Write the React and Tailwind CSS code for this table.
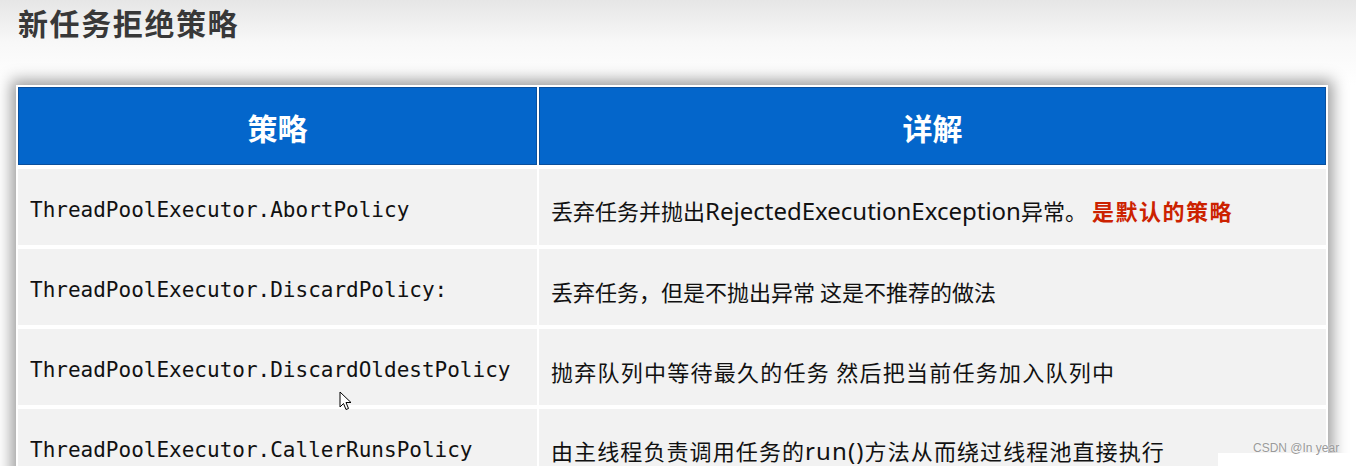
import React from 'react';

const MONO = { fontFamily: '"DejaVu Sans Mono", "Liberation Mono", monospace' };
const SANS = { fontFamily: '"Noto Sans CJK SC", "Noto Sans", sans-serif' };
const LATIN = { fontFamily: '"Noto Sans", "Noto Sans CJK SC", sans-serif' };

const ROWS = [
  {
    policy: 'ThreadPoolExecutor.AbortPolicy',
    detail: '丢弃任务并抛出RejectedExecutionException异常。',
    note: '是默认的策略',
    track: 'tracking-normal',
  },
  { policy: 'ThreadPoolExecutor.DiscardPolicy:', detail: '丢弃任务，但是不抛出异常 这是不推荐的做法', track: 'tracking-normal' },
  { policy: 'ThreadPoolExecutor.DiscardOldestPolicy', detail: '抛弃队列中等待最久的任务 然后把当前任务加入队列中', track: 'tracking-[1.25px]' },
  { policy: 'ThreadPoolExecutor.CallerRunsPolicy', detail: '由主线程负责调用任务的run()方法从而绕过线程池直接执行', track: 'tracking-[1.1px]' },
];

// Latin runs are set a touch larger, like YaHei's Latin glyphs
const Detail = ({ text }) =>
  text.split(/([A-Za-z()]+)/).map((part, i) =>
    /^[A-Za-z()]+$/.test(part) ? (
      <span key={i} className="text-[24px]" style={LATIN}>{part}</span>
    ) : (
      <span key={i}>{part}</span>
    )
  );

const Cursor = () => (
  <svg className="absolute left-[339px] top-[391px]" width="14" height="21" viewBox="0 0 14 21">
    <path
      d="M1 1 L1 16 L4.5 12.5 L7 18.5 L9.5 17.5 L7 11.5 L12 11.5 Z"
      fill="#fff"
      stroke="#000"
      strokeWidth="1"
    />
  </svg>
);

export default function App() {
  return (
    <div className="relative h-[466px] w-[1356px] overflow-hidden bg-white">
      {/* Title band */}
      <div className="h-[85px] bg-linear-to-b from-[#e6e6e6] via-[#f8f8f8] to-white pl-[18px] pt-[2px]">
        <h1 className="text-[30px] font-bold leading-[40px] tracking-[1.6px] text-[#383838]" style={SANS}>
          新任务拒绝策略
        </h1>
      </div>

      {/* Table */}
      <div className="ml-[16px] w-[1312px] bg-white p-[2px] shadow-[0_0_14px_5px_rgba(0,0,0,0.38)]">
        <div className="flex h-[78px]">
          <div className="flex w-[519px] items-center justify-center border border-[#0a4f9c] bg-[#0466cb] pt-[2px]">
            <span className="text-[30px] font-bold text-white" style={SANS}>策略</span>
          </div>
          <div className="w-[2px] bg-white" />
          <div className="flex flex-1 items-center justify-center border border-[#0a4f9c] bg-[#0466cb] pt-[2px]">
            <span className="text-[30px] font-bold text-white" style={SANS}>详解</span>
          </div>
        </div>

        {ROWS.map((row) => (
          <div key={row.policy} className="mt-[4px] flex h-[76px]">
            <div className="flex w-[519px] items-center bg-[#f2f2f2] pl-[12px] pt-[8px]">
              <span className="text-[21px] text-[#111]" style={MONO}>{row.policy}</span>
            </div>
            <div className="w-[2px] bg-white" />
            <div className="flex flex-1 items-center bg-[#f2f2f2] pl-[12px] pt-[8px]">
              <span className={`text-[22px] text-[#111] ${row.track}`} style={SANS}>
                <Detail text={row.detail} />
                {row.note && (
                  <span className="ml-[5px] font-bold tracking-[1.5px] text-[#cc2200]">{row.note}</span>
                )}
              </span>
            </div>
          </div>
        ))}
      </div>

      <Cursor />

      {/* Watermark */}
      <div className="absolute left-[1218px] top-[453px] h-[20px] w-[140px] bg-white" />
      <div
        className="absolute left-[1253px] top-[441px] text-[12px] leading-[14px] text-[#9a9a9a] [text-shadow:0_0_2px_#fff]"
        style={{ fontFamily: '"Liberation Sans", Arial, sans-serif' }}
      >
        CSDN @In year
      </div>
    </div>
  );
}
